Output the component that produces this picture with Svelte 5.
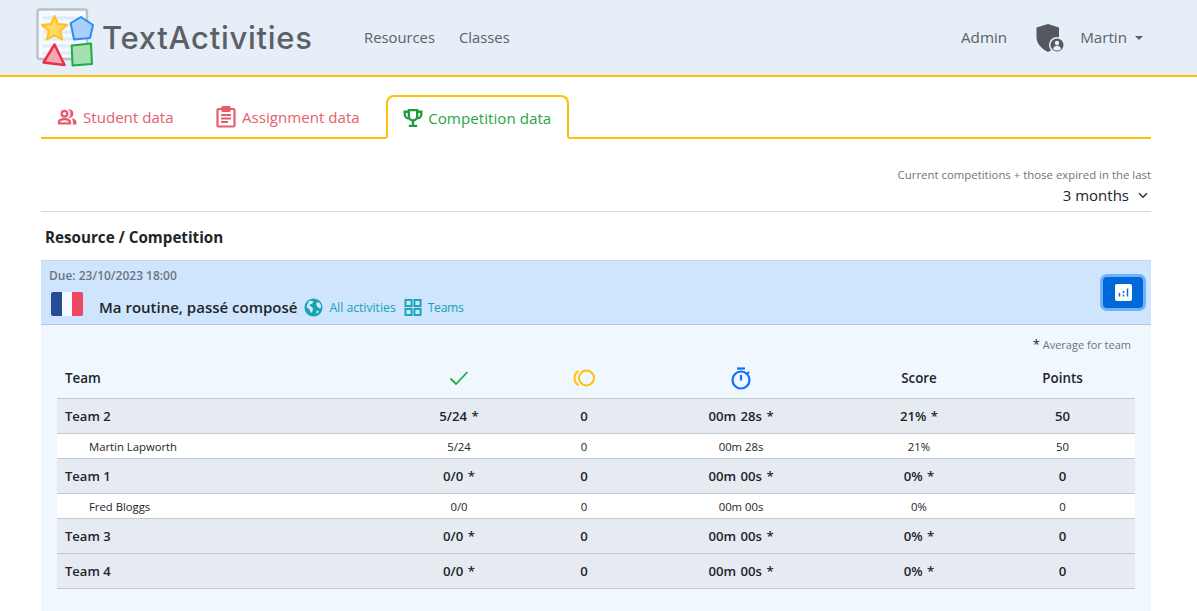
<script>
  const rows = [
    { kind: 'team', name: 'Team 2', done: '5/24 *', coins: '0', time: '00m 28s *', score: '21% *', points: '50' },
    { kind: 'member', name: 'Martin Lapworth', done: '5/24', coins: '0', time: '00m 28s', score: '21%', points: '50' },
    { kind: 'team', name: 'Team 1', done: '0/0 *', coins: '0', time: '00m 00s *', score: '0% *', points: '0' },
    { kind: 'member', name: 'Fred Bloggs', done: '0/0', coins: '0', time: '00m 00s', score: '0%', points: '0' },
    { kind: 'team', name: 'Team 3', done: '0/0 *', coins: '0', time: '00m 00s *', score: '0% *', points: '0' },
    { kind: 'team', name: 'Team 4', done: '0/0 *', coins: '0', time: '00m 00s *', score: '0% *', points: '0' }
  ];
</script>

<header class="topbar">
  <div class="brand">
    <svg class="logo" width="60" height="60" viewBox="0 0 60 60">
      <rect x="1.500" y="1.500" width="49.500" height="49.500" rx="2" fill="#f6f9fe" stroke="#bcc1c7" stroke-width="2.400"/>
      <path d="M7 10h40M7 17h40M7 24h40M7 31h40M7 38h40M7 45h40" stroke="#dfeafa" stroke-width="3"/>
      <path d="M18.500 8L22 16.100 30.900 17 24.200 22.900 26.100 31.500 18.500 27 10.900 31.500 12.800 22.900 6.100 17 15 16.100z" fill="#ffd866" stroke="#ffc21a" stroke-width="2" stroke-linejoin="round"/>
      <path d="M45 9l12 8-3 13-16 1.500-3.300-16.500z" fill="#a9cffb" stroke="#2f8bf5" stroke-width="2" stroke-linejoin="round"/>
      <path d="M18.500 36.500l10 20.500-21-2.500z" fill="#f5a9b3" stroke="#e8324c" stroke-width="2.500" stroke-linejoin="round"/>
      <path d="M35.700 37.500L55 35.500l1 20.500-19.500 1.500z" fill="#a6dfb0" stroke="#20ab46" stroke-width="2" stroke-linejoin="round"/>
    </svg>
    <span class="wordmark">TextActivities</span>
  </div>
  <nav class="mainnav">
    <span>Resources</span>
    <span>Classes</span>
  </nav>
  <div class="usernav">
    <span class="admin">Admin</span>
    <svg class="shield" width="30" height="30" viewBox="0 0 30 30">
      <path d="M14 1l11 3.500v9.500c0 7-5 12-11 15C8 26 2.500 21 2.500 14V4.500z" fill="#55585e"/>
      <circle cx="23" cy="22" r="8" fill="#e6eef7"/>
      <circle cx="23" cy="22" r="6.500" fill="#55585e"/>
      <circle cx="23" cy="20" r="2.200" fill="#e6eef7"/>
      <path d="M19 26c.5-2.500 2-3.200 4-3.200s3.500.7 4 3.200c-1 1-2.500 1.500-4 1.500s-3-.5-4-1.500z" fill="#e6eef7"/>
    </svg>
    <span class="user">Martin</span>
    <span class="caret"></span>
  </div>
</header>

<main class="page">
  <div class="tabs">
    <div class="tab first red">
      <svg width="20" height="20" viewBox="0 0 24 24" fill="#e85d6c"><circle cx="9" cy="8" r="3.400" fill="none" stroke="#e85d6c" stroke-width="2.800"/><path d="M15.500 3.800a4.300 4.300 0 0 1 0 8.400c1.800-1.800 1.800-6.600 0-8.400z" stroke="#e85d6c" stroke-width="1.600"/><path d="M1 21v-3c0-3 3.500-4.800 8-4.800s8 1.800 8 4.800v3zM3.800 18.400h10.400c-.3-1.600-2.400-2.500-5.200-2.500s-4.900.9-5.200 2.500z" fill-rule="evenodd"/><path d="M18 13.400c3 .4 5.300 1.900 5.300 4.600v3h-4.300v-3c0-1.800-.4-3.300-1-4.600z"/></svg>
      Student data
    </div>
    <div class="tab second red">
      <svg width="20" height="22" viewBox="0 0 20 22" fill="none" stroke="#e85d6c" stroke-width="2.200"><path d="M6 3H2.500a1 1 0 0 0-1 1v15.500a1 1 0 0 0 1 1h15a1 1 0 0 0 1-1V4a1 1 0 0 0-1-1H14"/><rect x="6.500" y="1" width="7" height="4" rx=".5" fill="#e85d6c"/><path d="M5 9h10M5 12.500h10M5 16h7"/></svg>
      Assignment data
    </div>
    <div class="tab green active">
      <svg width="20" height="20" viewBox="0 0 24 24" fill="none" stroke="#1f9d3e" stroke-width="2.800"><path d="M7 2.500h10v7.500a5 5 0 0 1-10 0z"/><path d="M7 4.500H2v3a5 5 0 0 0 5 5M17 4.500h5v3a5 5 0 0 1-5 5"/><path d="M12 15v5M7 21.500h10"/></svg>
      Competition data
    </div>
  </div>

  <div class="filter">
    <div class="filter-note">Current competitions + those expired in the last</div>
    <div class="filter-select">
      3 months
      <svg width="10" height="7" viewBox="0 0 10 7" fill="none" stroke="#333" stroke-width="1.500"><path d="M1 1.200l4 4 4-4"/></svg>
    </div>
  </div>

  <h2 class="section-title">Resource / Competition</h2>

  <section class="band">
    <div class="band-text">
      <div class="due">Due: 23/10/2023 18:00</div>
      <div class="resource">
        <span class="flag"><i class="blue"></i><i class="white"></i><i class="redf"></i></span>
        <span class="resname">Ma routine, passé composé</span>
        <span class="link">
          <svg width="19" height="19" viewBox="0 0 20 20"><circle cx="10" cy="10" r="9.500" fill="#17a2b8"/><path d="M5 3.500c2-1 4-.5 5 .5l-1.500 2-2 .5-.5 2 2.500 1 1 2-1 3.500-1.500.5-1-3.500L2.500 9.500zM13 5l3-.5 2 3.500-.5 3-2-.5-2.500-2.500zM12.500 14.500l2.500-1.500.5 1.500-2 2z" fill="#e4f4f8" opacity=".9"/></svg>
          All activities
        </span>
        <span class="link teams">
          <svg width="18" height="17" viewBox="0 0 18 18" fill="none" stroke="#17a2b8" stroke-width="2"><rect x="1" y="1" width="6.500" height="6.500"/><rect x="10.500" y="1" width="6.500" height="6.500"/><rect x="1" y="10.500" width="6.500" height="6.500"/><rect x="10.500" y="10.500" width="6.500" height="6.500"/></svg>
          Teams
        </span>
      </div>
    </div>
    <button class="chart-btn" aria-label="Chart">
      <svg width="17" height="17" viewBox="0 0 17 17"><rect width="17" height="17" rx="2" fill="#fff"/><path d="M4.500 9v3.500M8.500 7v2M8.500 10.500v2M12.500 4.500v8" stroke="#0b6ddb" stroke-width="1.500"/></svg>
    </button>
  </section>

  <section class="panel">
    <div class="avg"><span class="ast">*</span> Average for team</div>
    <div class="tbl">
      <div class="tr head">
        <div class="name">Team</div>
        <div><svg width="20" height="16" viewBox="0 0 20 16" fill="none" stroke="#28a745" stroke-width="1.800"><path d="M1.500 8.500l5.500 5.500L18.500 2"/></svg></div>
        <div><svg width="24" height="18" viewBox="0 0 24 18" fill="none" stroke="#ffc107" stroke-width="2"><circle cx="14.500" cy="9" r="7.500"/><path d="M6.500 1.800a8.500 8.500 0 0 0 0 14.400"/></svg></div>
        <div><svg width="20" height="23" viewBox="0 0 20 23" fill="none" stroke="#0d6efd" stroke-width="2.200"><path d="M6 1.500h8"/><circle cx="10" cy="13" r="8.500"/><path d="M10 8v5.500M16.500 5l1.500 1.500"/></svg></div>
        <div>Score</div>
        <div>Points</div>
      </div>
      {#each rows as r}
        <div class="tr {r.kind}">
          <div class="name">{r.name}</div>
          <div>{r.done}</div>
          <div>{r.coins}</div>
          <div>{r.time}</div>
          <div>{r.score}</div>
          <div>{r.points}</div>
        </div>
      {/each}
    </div>
  </section>
</main>

<style>
  :global(body) {
    margin: 0;
    background: #fff;
    font-family: "Open Sans", "Noto Sans", sans-serif;
    color: #212529;
    overflow: hidden;
  }
  .topbar {
    display: flex;
    align-items: center;
    height: 75px;
    background: #e6eef7;
    border-bottom: 2px solid #ffc107;
    padding: 0 54px 0 36px;
  }
  .brand {
    display: flex;
    align-items: center;
    width: 328px;
  }
  .logo {
    flex: none;
    margin-top: 1px;
  }
  .wordmark {
    font-family: Inter, "Open Sans", sans-serif;
    font-size: 31px;
    font-weight: 500;
    color: #5c6066;
    margin-left: 6px;
    letter-spacing: .72px;
  }
  .mainnav {
    display: flex;
    gap: 24px;
    font-size: 14.800px;
    color: #5d6167;
    padding-bottom: 2px;
  }
  .usernav {
    display: flex;
    align-items: center;
    margin-left: auto;
    font-size: 15.200px;
    color: #5d6167;
  }
  .admin, .user {
    padding-bottom: 2px;
  }
  .shield {
    margin-left: 27px;
  }
  .user {
    margin-left: 16px;
  }
  .caret {
    margin-left: 8px;
    border-top: 4.500px solid #5d6167;
    border-left: 4.500px solid transparent;
    border-right: 4.500px solid transparent;
  }
  .page {
    margin: 0 46px 0 41px;
  }
  .tabs {
    display: flex;
    align-items: flex-end;
    height: 42px;
    margin-top: 18px;
    border-bottom: 2px solid #ffc107;
  }
  .tab {
    display: flex;
    align-items: center;
    gap: 6px;
    height: 42px;
    padding: 2px 16px 0;
    font-size: 15.100px;
    box-sizing: border-box;
  }
  .tab.second {
    padding-left: 26.500px;
    padding-right: 26.500px;
  }
  .tab.red { color: #e85d6c; }
  .tab.green { color: #28a745; }
  .tab.active {
    height: 44px;
    margin-bottom: -2px;
    gap: 5px;
    padding: 2px 16px 0 15px;
    font-size: 15.200px;
    background: #fff;
    border: 2px solid #ffc107;
    border-bottom: 2px solid #fff;
    border-radius: 8px 8px 0 0;
  }
  .filter {
    text-align: right;
    border-bottom: 1px solid #d8dadc;
    height: 73px;
    box-sizing: border-box;
    padding-top: 28px;
  }
  .filter-note {
    font-size: 11.400px;
    line-height: 16px;
    color: #6c757d;
  }
  .filter-select {
    display: flex;
    justify-content: flex-end;
    align-items: center;
    gap: 9px;
    padding-right: 3px;
    font-size: 15px;
    line-height: 24px;
  }
  .section-title {
    margin: 0;
    padding-left: 4px;
    font-size: 15.200px;
    font-weight: 700;
    line-height: 50px;
    height: 49px;
    margin-bottom: -1px;
  }
  .band {
    display: flex;
    justify-content: space-between;
    align-items: center;
    box-sizing: border-box;
    height: 65px;
    padding: 0 7px 0 8px;
    background: #cfe5fd;
    border-top: 1px solid #c9d6e4;
    border-bottom: 1px solid #b5c8dc;
  }
  .band-text {
    align-self: flex-start;
    padding-top: 7px;
  }
  .due {
    font-size: 12px;
    font-weight: 600;
    line-height: 16px;
    color: #6c757d;
  }
  .resource {
    display: flex;
    align-items: center;
    margin-top: 8px;
    height: 30px;
  }
  .flag {
    display: flex;
    align-self: flex-start;
    width: 32px;
    height: 24px;
    border-radius: 2px;
    overflow: hidden;
    margin-left: 2px;
  }
  .flag i { flex: 1; }
  .blue { background: #264b97; }
  .white { background: #f6f9ff; }
  .redf { background: #ef4560; }
  .resname {
    font-size: 15px;
    font-weight: 600;
    margin-left: 16px;
  }
  .link {
    display: flex;
    align-items: center;
    gap: 6px;
    font-size: 12.200px;
    color: #17a2b8;
    margin-left: 7px;
  }
  .link.teams {
    margin-left: 8px;
    letter-spacing: -.3px;
  }
  .chart-btn {
    display: flex;
    align-items: center;
    justify-content: center;
    width: 40px;
    height: 31px;
    box-sizing: border-box;
    background: #0069d9;
    border: none;
    border-radius: 4px;
    box-shadow: 0 0 0 3px #6fb2fb;
    margin-right: 1px;
    padding: 0;
  }
  .panel {
    background: #f0f7ff;
    padding: 0 16px 22px;
    min-height: 264px;
    box-sizing: border-box;
  }
  .avg {
    text-align: right;
    font-size: 11px;
    line-height: 16px;
    color: #6c757d;
    padding: 11px 4px 0 0;
  }
  .ast { color: #212529; font-size: 13px; }
  .tbl {
    margin-top: 7px;
  }
  .tr {
    display: grid;
    grid-template-columns: 327px 150px 100px 214px 142px 145px;
    align-items: center;
    text-align: center;
    box-sizing: border-box;
    border-bottom: 1px solid #c4c9cf;
  }
  .name { text-align: left; }
  .head {
    height: 39px;
    font-size: 13.400px;
    font-weight: 600;
    padding-bottom: 2px;
  }
  .head > div {
    display: flex;
    justify-content: center;
    align-items: center;
  }
  .head .name {
    justify-content: flex-start;
    padding-left: 8px;
  }
  .team {
    height: 35px;
    background: #e6ebf2;
    font-size: 13px;
    font-weight: 600;
  }
  .team .name { padding-left: 8px; }
  .team > div:not(.name) {
    font-size: 13.200px;
    word-spacing: 1px;
  }
  .member {
    height: 25px;
    background: #fff;
    font-size: 11.300px;
  }
  .member .name { padding-left: 32px; }
</style>
